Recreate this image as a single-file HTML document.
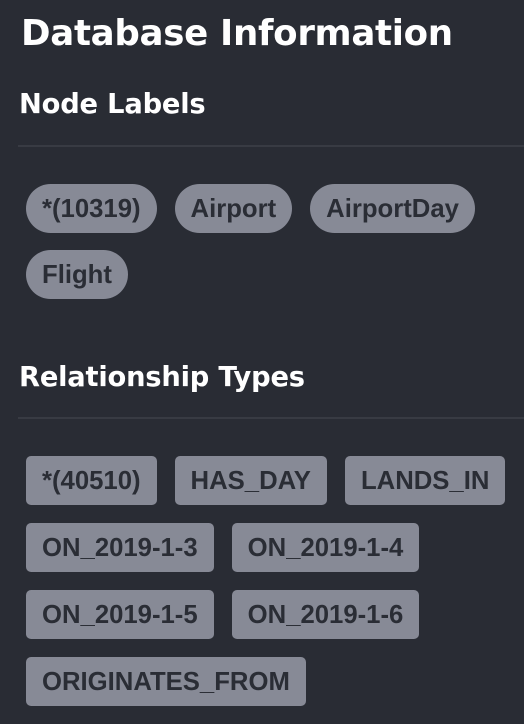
<!DOCTYPE html>
<html><head><meta charset="utf-8"><style>
html,body{margin:0;padding:0;width:524px;height:724px;background:#292c34;overflow:hidden;font-family:"Liberation Sans",sans-serif;}
.t{position:absolute;left:21px;top:13px;color:#fff;font-weight:bold;font-size:35.6px;white-space:nowrap;font-family:"DejaVu Sans",sans-serif;letter-spacing:-0.3px}
.h{position:absolute;left:19px;color:#fff;font-weight:bold;font-size:27.3px;white-space:nowrap;font-family:"DejaVu Sans",sans-serif;letter-spacing:-0.2px}
.l{position:absolute;left:18px;right:0;height:2px;background:#383b43}
.g{position:absolute;left:26px;width:495px;display:flex;flex-wrap:wrap;column-gap:18px;}
.p{box-sizing:border-box;height:49px;line-height:50px;background:#878a96;color:#2a2d35;font-weight:bold;font-size:25.7px;padding:0 16px;white-space:nowrap}
.r{border-radius:25px;}
.s{border-radius:5px;}
</style></head><body>
<div class="t">Database Information</div>
<div class="h" style="top:89px">Node Labels</div>
<div class="l" style="top:145px"></div>
<div class="g" style="top:184px;row-gap:17px">
<div class="p r">*(10319)</div><div class="p r">Airport</div><div class="p r">AirportDay</div><div class="p r">Flight</div>
</div>
<div class="h" style="top:362px">Relationship Types</div>
<div class="l" style="top:417px"></div>
<div class="g" style="top:456px;row-gap:18px">
<div class="p s">*(40510)</div><div class="p s">HAS_DAY</div><div class="p s">LANDS_IN</div>
<div class="p s">ON_2019-1-3</div><div class="p s">ON_2019-1-4</div>
<div class="p s">ON_2019-1-5</div><div class="p s">ON_2019-1-6</div>
<div class="p s">ORIGINATES_FROM</div>
</div>
</body></html>
